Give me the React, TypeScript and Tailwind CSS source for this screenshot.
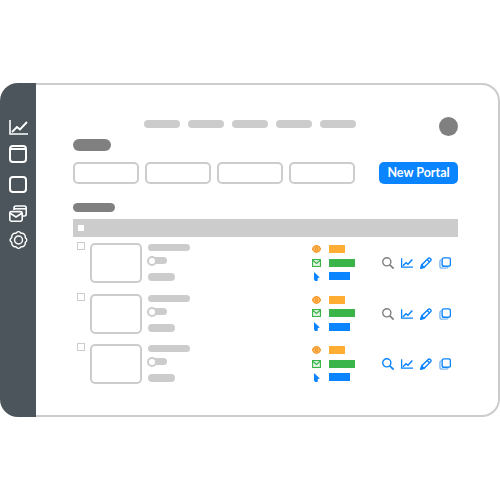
import React from 'react';

const Pill = ({ className }: { className: string }) => <div className={`rounded-full ${className}`} />;

const ChartIcon = ({ color, w, h, sw }: { color: string; w: number; h: number; sw: number }) => (
  <svg width={w} height={h} viewBox="0 0 19 15" fill="none" stroke={color} strokeWidth={sw}>
    <path d="M1 0V14H19" />
    <path d="M3 12L8 7L11 9.5L18 2" strokeWidth={sw + 0.3} />
  </svg>
);

const SearchIcon = ({ color }: { color: string }) => (
  <svg width="12" height="12" viewBox="0 0 12 12" fill="none" stroke={color} strokeWidth="1.4">
    <circle cx="4.8" cy="4.8" r="4.1" />
    <path d="M7.8 7.8L11.6 11.6" strokeWidth="1.7" />
  </svg>
);

const PencilIcon = () => (
  <svg width="12" height="12" viewBox="0 0 13 13" fill="none" stroke="#0a84ff" strokeWidth="1.5">
    <path d="M1 12L1.8 8.6L8.8 1.6C9.5 .9 10.4 .9 11.2 1.6L11.5 1.9C12.2 2.6 12.2 3.5 11.5 4.2L4.4 11.2Z" />
    <path d="M7.8 2.6L10.5 5.3" />
    <path d="M1 12L2 8.8L4.2 11Z" fill="#0a84ff" />
  </svg>
);

const CopyIcon = () => (
  <svg width="12" height="12" viewBox="0 0 13 13" fill="none" stroke="#0a84ff" strokeWidth="1.5">
    <rect x="3.4" y="1" width="9" height="9" rx="2" />
    <path d="M3.2 3H2.6C1.5 3.4 1 4 1 5V10C1 11.2 1.8 12 3 12H8C9 12 9.7 11.4 10 10.4" stroke="#7db9f5" />
  </svg>
);

const EyeIcon = () => (
  <svg width="9" height="8" viewBox="0 0 9 8" fill="none" stroke="#f7931e" strokeWidth="1.2">
    <path d="M.5 4C1.5 1.6 3 .7 4.5 .7S7.5 1.6 8.5 4C7.5 6.4 6 7.3 4.5 7.3S1.5 6.4 .5 4Z" fill="#fbc67a" />
    <circle cx="4.5" cy="4" r="1.3" />
  </svg>
);

const MailIcon = () => (
  <svg width="9" height="8" viewBox="0 0 9 8" fill="none" stroke="#39b54a" strokeWidth="1.2">
    <rect x=".5" y=".5" width="8" height="7" fill="#e4f5e6" />
    <path d="M.5 1L4.5 4.5L8.5 1" />
  </svg>
);

const CursorIcon = () => (
  <svg width="6" height="9" viewBox="0 0 6 9">
    <path d="M0 0L5.8 5.6L3.8 6L3.6 9H1.2L0 7.4Z" fill="#0a84ff" />
  </svg>
);

const Row = ({ searchColor }: { searchColor: string }) => (
  <div className="flex h-[50.5px]">
    <div className="ml-1 mt-[5px] h-2 w-2 border border-[#ccc]" />
    <div className="ml-[5px] mt-1.5 h-10 w-[52px] rounded-[5px] border-2 border-[#ccc]" />
    <div className="ml-1.5 mt-[7px] flex w-[42px] flex-col">
      <Pill className="h-[7px] w-[42px] bg-[#ccc]" />
      <div className="relative mt-[6px] h-[7px] w-[19px]">
        <Pill className="ml-1 h-[7px] w-[15px] bg-[#ccc]" />
        <div className="absolute -left-px -top-px h-[10px] w-[10px] rounded-full border-2 border-[#ccc] bg-white" />
      </div>
      <Pill className="mt-[9px] h-[8px] w-[27px] bg-[#ccc]" />
    </div>
    <div className="ml-[122px] mt-2 flex w-[45px] flex-col gap-[5.5px]">
      <div className="flex h-2 items-center">
        <div className="flex w-[17px] shrink-0"><EyeIcon /></div>
        <div className="h-2 w-4 bg-[#ffad33]" />
      </div>
      <div className="flex h-2 items-center">
        <div className="flex w-[17px] shrink-0"><MailIcon /></div>
        <div className="h-2 w-[26px] bg-[#39b54a]" />
      </div>
      <div className="flex h-2 items-center">
        <div className="flex w-[17px] shrink-0 pl-[2px]"><CursorIcon /></div>
        <div className="h-2 w-[21px] bg-[#0a84ff]" />
      </div>
    </div>
    <div className="ml-[25px] mt-5 flex h-3 gap-[7px]">
      <SearchIcon color={searchColor} />
      <div className="pt-px"><ChartIcon color="#0a84ff" w={12} h={10} sw={2} /></div>
      <PencilIcon />
      <CopyIcon />
    </div>
  </div>
);

export default function App() {
  return (
    <div className="h-[500px] w-[500px] bg-white pt-[83px] font-['Lato',sans-serif]">
      <div className="flex h-[334px] w-[500px]">
        {/* sidebar */}
        <div className="flex w-9 shrink-0 flex-col items-center rounded-l-[18px] bg-[#4b555b] pt-[37px] text-white">
          <ChartIcon color="white" w={19} h={15} sw={1.6} />
          <div className="mt-[10px] flex h-[18px] w-[18px] rounded-[4px] border-2 border-white">
            <div className="mt-px h-[2px] w-full bg-white" />
          </div>
          <div className="mt-[13px] h-[17px] w-[18px] rounded-[4px] border-2 border-white" />
          <svg className="mt-3" width="18" height="17" viewBox="0 0 18 17" fill="none" stroke="white" strokeWidth="1.6">
            <path d="M5 5V3C5 1.8 5.8 1 7 1H15.5C16.5 1 17.2 1.8 17.2 3V9C17.2 10.2 16.5 11 15.5 11H13.5" />
            <path d="M5 3.8H17" />
            <rect x=".8" y="6.6" width="12.4" height="9.6" rx="1.6" fill="#4b555b" />
            <path d="M.8 8L7 12L13.2 8" />
          </svg>
          <svg className="mt-[9px]" width="19" height="18" viewBox="0 0 19 19" fill="none" stroke="white" strokeWidth="1.5">
            <path
              d="M7.6 1.6C8.6 .6 10.4 .6 11.4 1.6L12.2 2.4L13.4 2.4C14.9 2.4 16.6 4.1 16.6 5.6L16.6 6.8L17.4 7.6C18.4 8.6 18.4 10.4 17.4 11.4L16.6 12.2L16.6 13.4C16.6 14.9 14.9 16.6 13.4 16.6L12.2 16.6L11.4 17.4C10.4 18.4 8.6 18.4 7.6 17.4L6.8 16.6L5.6 16.6C4.1 16.6 2.4 14.9 2.4 13.4L2.4 12.2L1.6 11.4C.6 10.4 .6 8.6 1.6 7.6L2.4 6.8L2.4 5.6C2.4 4.1 4.1 2.4 5.6 2.4L6.8 2.4Z"
              strokeLinejoin="round"
            />
            <circle cx="9.5" cy="9.5" r="4.2" />
          </svg>
        </div>

        {/* main */}
        <div className="min-w-0 flex-1 rounded-r-[18px] border-y-2 border-r-2 border-[#ccc] pl-[37px] pr-10">
          <div className="relative flex gap-2 pl-[71px] pt-[35px]">
            <Pill className="h-2 w-9 bg-[#ccc]" />
            <Pill className="h-2 w-9 bg-[#ccc]" />
            <Pill className="h-2 w-9 bg-[#ccc]" />
            <Pill className="h-2 w-9 bg-[#ccc]" />
            <Pill className="h-2 w-9 bg-[#ccc]" />
            <div className="absolute right-0 top-8 h-[19px] w-[19px] rounded-full bg-[#808080]" />
          </div>
          <Pill className="mt-[11px] h-3 w-[38px] bg-[#808080]" />
          <div className="mt-[11px] flex h-[22px]">
            <div className="flex gap-1.5">
              <div className="h-[22px] w-[66px] rounded-[5px] border-2 border-[#ccc]" />
              <div className="h-[22px] w-[66px] rounded-[5px] border-2 border-[#ccc]" />
              <div className="h-[22px] w-[66px] rounded-[5px] border-2 border-[#ccc]" />
              <div className="h-[22px] w-[66px] rounded-[5px] border-2 border-[#ccc]" />
            </div>
            <div className="ml-6 flex h-[22px] w-[79px] items-center justify-center rounded-[5px] bg-[#0a84ff] text-[12.5px] font-bold text-white">
              New Portal
            </div>
          </div>
          <Pill className="mt-[19px] h-[9px] w-[42px] bg-[#808080]" />
          <div className="mt-[7px] flex h-[18px] items-center bg-[#ccc] pl-[5px]">
            <div className="h-1.5 w-1.5 bg-white" />
          </div>
          <Row searchColor="#808080" />
          <Row searchColor="#808080" />
          <Row searchColor="#0a84ff" />
        </div>
      </div>
    </div>
  );
}
